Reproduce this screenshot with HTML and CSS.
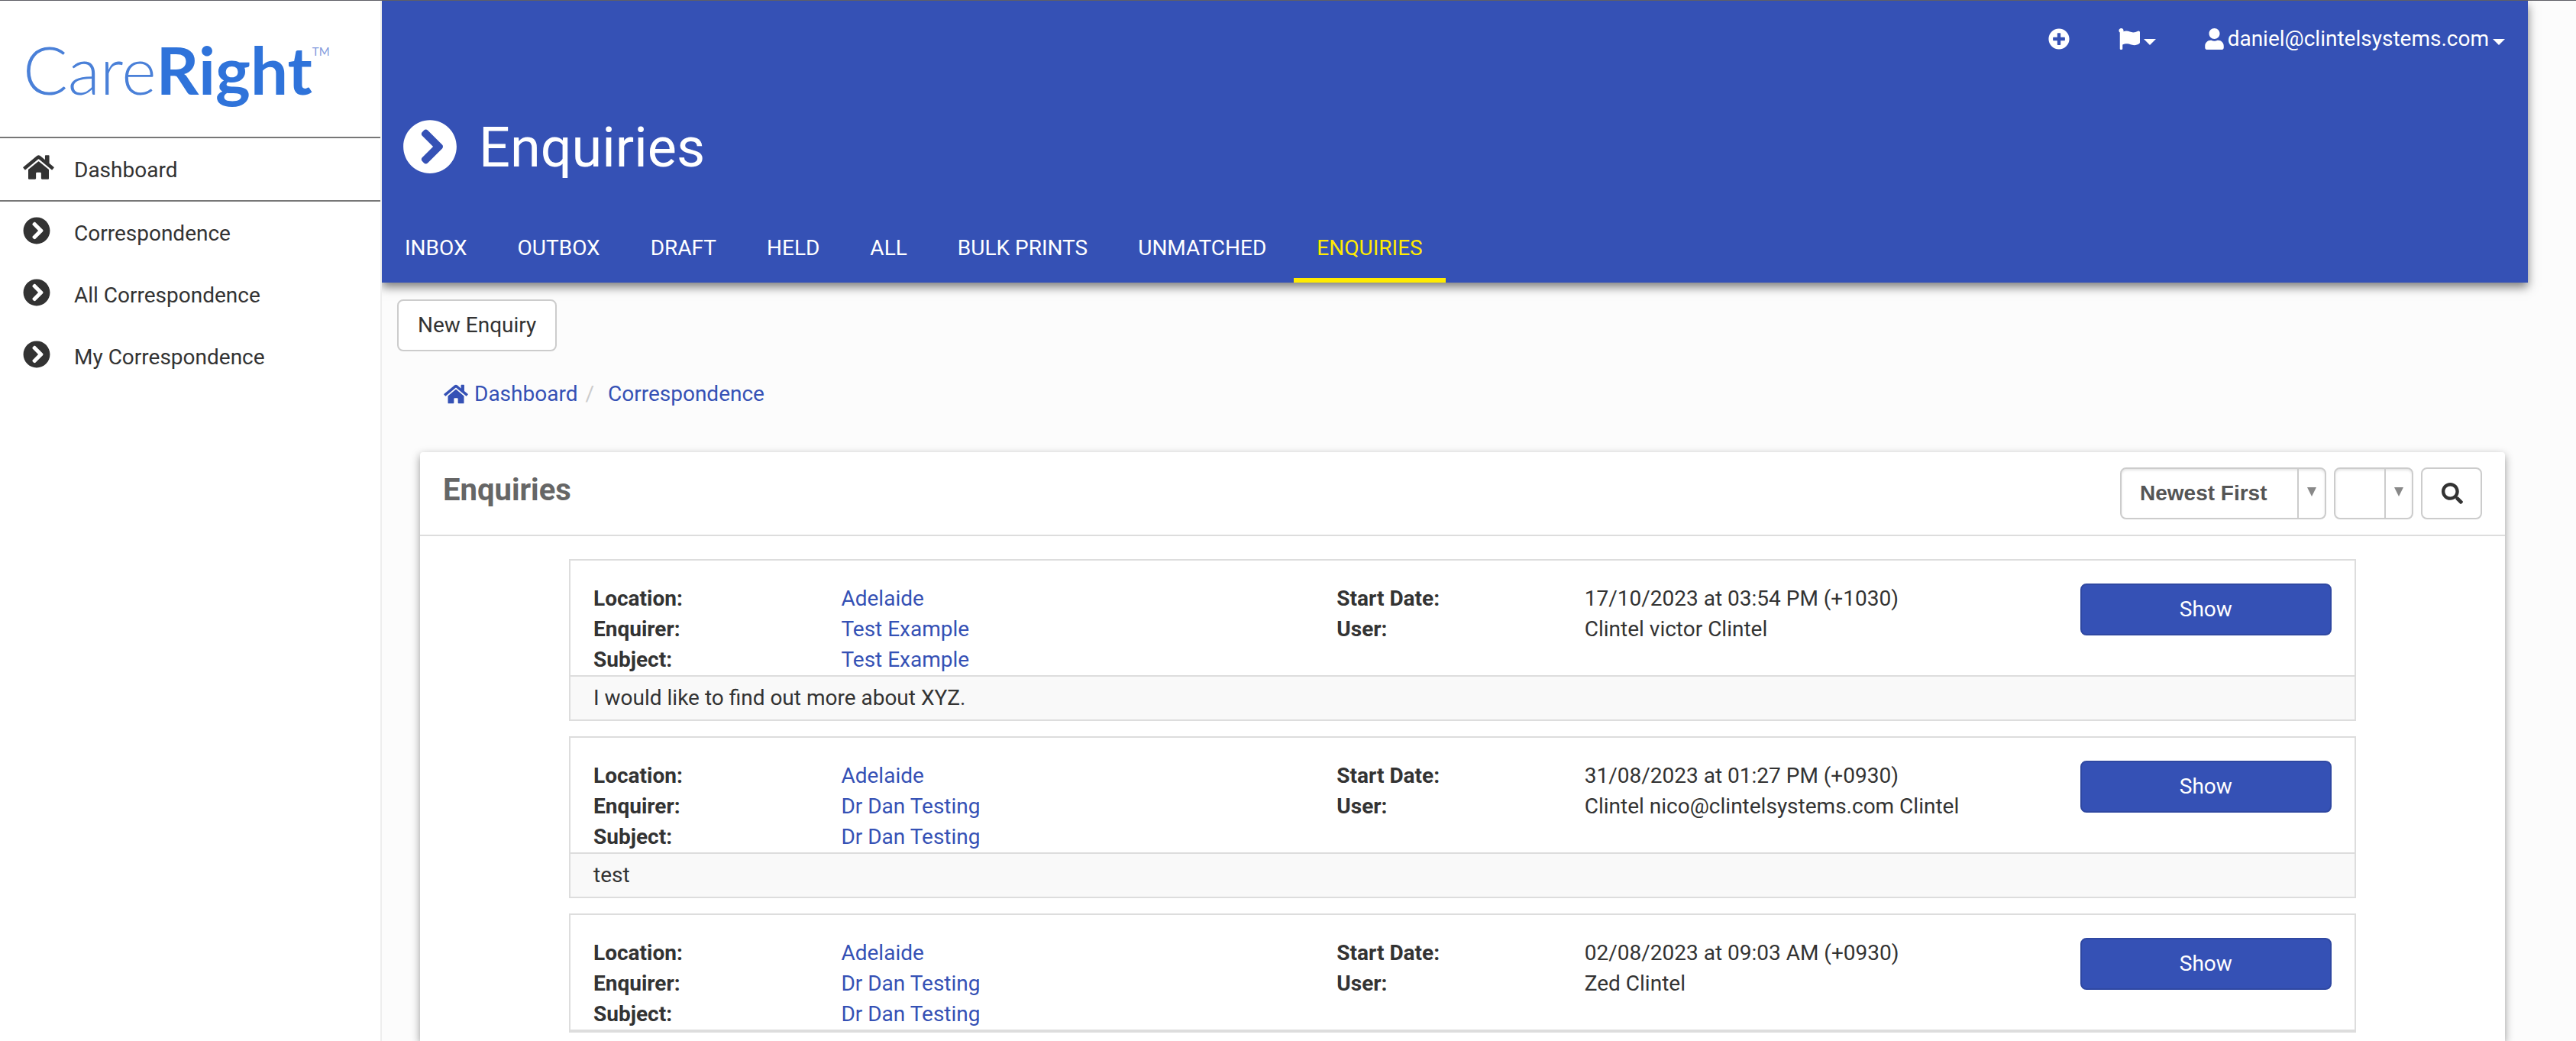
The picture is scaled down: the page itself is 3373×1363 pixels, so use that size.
FILE: index.html
```html
<!DOCTYPE html>
<html lang="en">
<head>
<meta charset="utf-8">
<title>Enquiries - CareRight</title>
<link rel="stylesheet" href="styles.css">
</head>
<body>
<svg class="sprite" aria-hidden="true">
  <symbol id="i-chevron" viewBox="0 0 512 512"><path d="M256 8c137 0 248 111 248 248S393 504 256 504 8 393 8 256 119 8 256 8zm113.900 231L234.400 103.500c-9.400-9.400-24.600-9.400-33.900 0l-17 17c-9.400 9.400-9.400 24.600 0 33.900L285.100 256 183.500 357.600c-9.400 9.400-9.400 24.600 0 33.900l17 17c9.400 9.400 24.600 9.400 33.900 0L369.900 273c9.400-9.400 9.400-24.600 0-34z"/></symbol>
  <symbol id="i-plus" viewBox="0 0 512 512"><path d="M256 8C119 8 8 119 8 256s111 248 248 248 248-111 248-248S393 8 256 8zm144 276c0 6.600-5.400 12-12 12h-92v92c0 6.600-5.400 12-12 12h-56c-6.600 0-12-5.400-12-12v-92h-92c-6.600 0-12-5.400-12-12v-56c0-6.600 5.400-12 12-12h92v-92c0-6.600 5.400-12 12-12h56c6.600 0 12 5.400 12 12v92h92c6.600 0 12 5.400 12 12v56z"/></symbol>
  <symbol id="i-home" viewBox="0 0 576 512"><path d="M280.370 148.260L96 300.110V464a16 16 0 0 0 16 16l112.060-.29a16 16 0 0 0 15.920-16V368a16 16 0 0 1 16-16h64a16 16 0 0 1 16 16v95.640a16 16 0 0 0 16 16.050L464 480a16 16 0 0 0 16-16V300L295.670 148.260a12.190 12.190 0 0 0-15.300 0zM571.600 251.470L488 182.560V44.050a12 12 0 0 0-12-12h-56a12 12 0 0 0-12 12v72.610L318.470 43a48 48 0 0 0-61 0L4.340 251.470a12 12 0 0 0-1.600 16.900l25.500 31A12 12 0 0 0 45.150 301l235.220-193.740a12.190 12.190 0 0 1 15.300 0L530.900 301a12 12 0 0 0 16.900-1.600l25.500-31a12 12 0 0 0-1.700-16.930z"/></symbol>
  <symbol id="i-flag" viewBox="0 0 512 512"><path d="M349.565 98.783C295.978 98.783 251.721 64 184.348 64c-24.955 0-47.309 4.384-68.045 12.013a55.947 55.947 0 0 0 3.586-23.562C118.117 24.015 94.806 1.206 66.338.048 34.345-1.254 8 24.296 8 56c0 19.026 9.497 35.825 24 45.945V488c0 13.255 10.745 24 24 24h16c13.255 0 24-10.745 24-24v-94.400c28.311-12.064 63.582-22.122 114.435-22.122 53.588 0 97.844 34.783 165.217 34.783 48.169 0 86.667-16.294 122.505-40.858C506.840 359.452 512 349.571 512 339.045v-243.100c0-23.393-24.269-38.870-45.485-29.016-34.338 15.948-76.454 31.854-116.950 31.854z"/></symbol>
  <symbol id="i-user" viewBox="0 0 448 512"><path d="M224 256c70.700 0 128-57.300 128-128S294.700 0 224 0 96 57.300 96 128s57.300 128 128 128zm89.600 32h-16.700c-22.200 10.200-46.900 16-72.900 16s-50.600-5.800-72.900-16h-16.700C60.200 288 0 348.200 0 422.400V464c0 26.500 21.500 48 48 48h352c26.500 0 48-21.500 48-48v-41.600c0-74.200-60.200-134.400-134.400-134.400z"/></symbol>
  <symbol id="i-search" viewBox="0 0 512 512"><path d="M505 442.700L405.300 343c-4.500-4.500-10.600-7-17-7H372c27.600-35.300 44-79.700 44-128C416 93.100 322.900 0 208 0S0 93.100 0 208s93.100 208 208 208c48.300 0 92.700-16.400 128-44v16.300c0 6.400 2.500 12.500 7 17l99.700 99.700c9.400 9.400 24.600 9.400 33.900 0l28.300-28.300c9.400-9.400 9.400-24.600.1-34zM208 336c-70.700 0-128-57.200-128-128 0-70.700 57.200-128 128-128 70.700 0 128 57.200 128 128 0 70.700-57.200 128-128 128z"/></symbol>
</svg>

<aside class="sidebar">
  <a class="logo" href="#" aria-label="CareRight"><span class="logo-care">Care</span><span class="logo-right">Right</span><span class="logo-tm">TM</span></a>
  <nav class="side-nav">
    <a class="side-link side-home" href="#"><svg class="side-icon wide"><use href="#i-home"/></svg><span>Dashboard</span></a>
    <a class="side-link" href="#"><svg class="side-icon"><use href="#i-chevron"/></svg><span>Correspondence</span></a>
    <a class="side-link" href="#"><svg class="side-icon"><use href="#i-chevron"/></svg><span>All Correspondence</span></a>
    <a class="side-link" href="#"><svg class="side-icon"><use href="#i-chevron"/></svg><span>My Correspondence</span></a>
  </nav>
</aside>

<main class="main">
  <header class="header">
    <div class="topbar">
      <a class="top-link" href="#" aria-label="Add"><svg class="icon"><use href="#i-plus"/></svg></a>
      <a class="top-link" href="#" aria-label="Flags"><svg class="icon"><use href="#i-flag"/></svg><span class="caret"></span></a>
      <a class="top-link" href="#"><svg class="icon narrow"><use href="#i-user"/></svg>daniel@clintelsystems.com<span class="caret"></span></a>
    </div>
    <div class="title-row"><svg class="title-icon"><use href="#i-chevron"/></svg><h1 class="title">Enquiries</h1></div>
    <nav class="tabs">
      <a class="tab" href="#">INBOX</a>
      <a class="tab" href="#">OUTBOX</a>
      <a class="tab" href="#">DRAFT</a>
      <a class="tab" href="#">HELD</a>
      <a class="tab" href="#">ALL</a>
      <a class="tab" href="#">BULK PRINTS</a>
      <a class="tab" href="#">UNMATCHED</a>
      <a class="tab active" href="#">ENQUIRIES</a>
    </nav>
  </header>

  <div class="actions"><button class="btn" type="button">New Enquiry</button></div>

  <nav class="breadcrumb">
    <a class="crumb" href="#"><svg class="icon broad"><use href="#i-home"/></svg>Dashboard</a>
    <span class="slash">/</span>
    <a class="crumb" href="#">Correspondence</a>
  </nav>

  <section class="panel">
    <div class="panel-head">
      <h2 class="panel-title">Enquiries</h2>
      <form class="filters">
        <div class="select sort">
          <select aria-label="Sort order"><option>Newest First</option><option>Oldest First</option></select>
          <span class="arrow"></span>
        </div>
        <div class="select status">
          <select aria-label="Status"><option></option></select>
          <span class="arrow"></span>
        </div>
        <button class="btn search" type="button" aria-label="Search"><svg class="icon"><use href="#i-search"/></svg></button>
      </form>
    </div>
    <div class="cards">
      <article class="card">
        <div class="card-body">
          <div class="cell label">Location:<br>Enquirer:<br>Subject:</div>
          <div class="cell"><a href="#">Adelaide</a><br><a href="#">Test Example</a><br><a href="#">Test Example</a></div>
          <div class="cell label">Start Date:<br>User:</div>
          <div class="cell">17/10/2023 at 03:54 PM (+1030)<br>Clintel victor Clintel</div>
          <div class="cell"><button class="btn show" type="button">Show</button></div>
        </div>
        <div class="card-note">I would like to find out more about XYZ.</div>
      </article>
      <article class="card">
        <div class="card-body">
          <div class="cell label">Location:<br>Enquirer:<br>Subject:</div>
          <div class="cell"><a href="#">Adelaide</a><br><a href="#">Dr Dan Testing</a><br><a href="#">Dr Dan Testing</a></div>
          <div class="cell label">Start Date:<br>User:</div>
          <div class="cell">31/08/2023 at 01:27 PM (+0930)<br>Clintel nico@clintelsystems.com Clintel</div>
          <div class="cell"><button class="btn show" type="button">Show</button></div>
        </div>
        <div class="card-note">test</div>
      </article>
      <article class="card">
        <div class="card-body">
          <div class="cell label">Location:<br>Enquirer:<br>Subject:</div>
          <div class="cell"><a href="#">Adelaide</a><br><a href="#">Dr Dan Testing</a><br><a href="#">Dr Dan Testing</a></div>
          <div class="cell label">Start Date:<br>User:</div>
          <div class="cell">02/08/2023 at 09:03 AM (+0930)<br>Zed Clintel</div>
          <div class="cell"><button class="btn show" type="button">Show</button></div>
        </div>
        <div class="card-note"></div>
      </article>
    </div>
  </section>
</main>
</body>
</html>
```
FILE: styles.css
```css
* { box-sizing: border-box; }

body {
  margin: 0;
  min-height: 100vh;
  display: flex;
  border-top: 1px solid #5f5f66;
  background: #fcfcfc;
  color: #333;
  font: 28px/40px Roboto, "Liberation Sans", sans-serif;
}

a { color: #3551b5; text-decoration: none; }
svg { fill: currentColor; flex: none; }
h1, h2 { margin: 0; }
.sprite { display: none; }

.icon { width: 28px; height: 28px; }
.icon.narrow { width: 25px; }
.icon.broad { width: 32px; }

/* Sidebar */
.sidebar {
  flex: none;
  width: 500px;
  background: #fff;
  border-right: 2px solid #eee;
  z-index: 1;
}
.logo {
  display: flex;
  align-items: flex-start;
  height: 178px;
  padding: 38px 0 0 30px;
  font-family: Lato, "Liberation Sans", sans-serif;
  font-size: 87px;
  line-height: 104px;
  color: #2f73da;
}
.logo-care { font-weight: 300; color: #4a80d8; }
.logo-right { font-weight: 700; }
.logo-tm { font-size: 15px; line-height: 56px; color: #8299dc; }

.side-link {
  display: flex;
  align-items: flex-start;
  gap: 31px;
  padding: 20px 30px 17px;
  line-height: 44px;
  color: #333;
}
.side-home {
  gap: 26px;
  border-top: 2px solid #777;
  border-bottom: 2px solid #777;
}
.side-icon { width: 36px; height: 36px; }
.side-icon.wide { width: 41px; }

/* Header */
.main {
  flex: 1;
  min-width: 0;
  display: flex;
  flex-direction: column;
  padding-right: 63px;
}
.header {
  background: #3551b5;
  color: #fff;
  box-shadow: 0 6px 12px rgba(0, 0, 0, .5);
}
.topbar {
  display: flex;
  justify-content: flex-end;
  gap: 64px;
  padding: 30px 30px 0;
}
.top-link {
  display: flex;
  align-items: center;
  gap: 5px;
  color: #fff;
}
.caret {
  border: 8px solid transparent;
  border-top-color: currentColor;
  border-bottom: 0;
  margin-top: 8px;
}
.title-row {
  display: flex;
  align-items: flex-start;
  gap: 28px;
  margin: 85px 0 52px;
  padding-left: 27px;
}
.title-icon { width: 72px; height: 72px; }
.title { font-size: 72px; font-weight: 400; line-height: 76px; }
.tabs { display: flex; gap: 6px; }
.tab {
  padding: 21px 30px 19px;
  border-bottom: 6px solid transparent;
  color: #fff;
}
.tab.active { color: #ffeb00; border-color: #ffeb00; }

/* Buttons */
.btn {
  height: 68px;
  padding: 0 25px;
  border: 2px solid #ccc;
  border-radius: 8px;
  background: #fff;
  color: #333;
  font: inherit;
}
.btn.search { width: 80px; display: grid; place-items: center; }
.btn.show {
  width: 100%;
  background: #3551b5;
  border-color: #2f48a2;
  color: #fff;
}

.actions { padding: 22px 20px 36px; display: flex; }

.breadcrumb {
  display: flex;
  gap: 10px;
  padding: 0 81px 56px;
}
.crumb { display: flex; align-items: center; gap: 8px; }
.slash { color: #ccc; padding-right: 8px; }

/* Panel */
.panel {
  flex: 1;
  margin: 0 30px 0 50px;
  background: #fff;
  border-radius: 4px 4px 0 0;
  box-shadow: 0 4px 12px rgba(0, 0, 0, .4);
}
.panel-head {
  display: flex;
  justify-content: space-between;
  align-items: flex-start;
  padding: 20px 30px;
  border-bottom: 2px solid #ddd;
}
.panel-title { font-size: 40px; line-height: 60px; font-weight: 700; color: #666; }
.filters { display: flex; gap: 10px; }
.select {
  display: grid;
  height: 68px;
  border: 2px solid #ccc;
  border-radius: 8px;
  box-shadow: inset 0 2px 3px rgba(0, 0, 0, .1);
}
.select.sort { width: 270px; }
.select.status { width: 104px; }
.select select, .arrow { grid-area: 1 / 1; }
.select select {
  appearance: none;
  width: 100%;
  padding: 0 40px 0 24px;
  border: 0;
  background: transparent;
  color: #555;
  font: bold 28px/40px "Liberation Sans", sans-serif;
}
.arrow {
  justify-self: end;
  width: 36px;
  display: grid;
  place-items: center;
  border-left: 2px solid #ccc;
  pointer-events: none;
}
.arrow::before {
  content: "";
  border: 6px solid transparent;
  border-top: 12px solid #888;
  border-bottom: 0;
  margin-bottom: 4px;
}

.cards {
  display: flex;
  flex-direction: column;
  gap: 20px;
  padding: 30px calc(100% / 14) 0;
}
.card { border: 2px solid #ddd; }
.card-body {
  display: grid;
  grid-template-columns: 5fr 10fr 5fr 10fr 6fr;
  padding-top: 30px;
}
.cell { padding: 0 30px; min-width: 0; }
.cell.label { font-weight: 700; padding-right: 0; }
.card-note {
  padding: 8px 30px;
  border-top: 2px solid #ddd;
  background: #f9f9f9;
}
.card-note:empty { padding: 0; }
```
